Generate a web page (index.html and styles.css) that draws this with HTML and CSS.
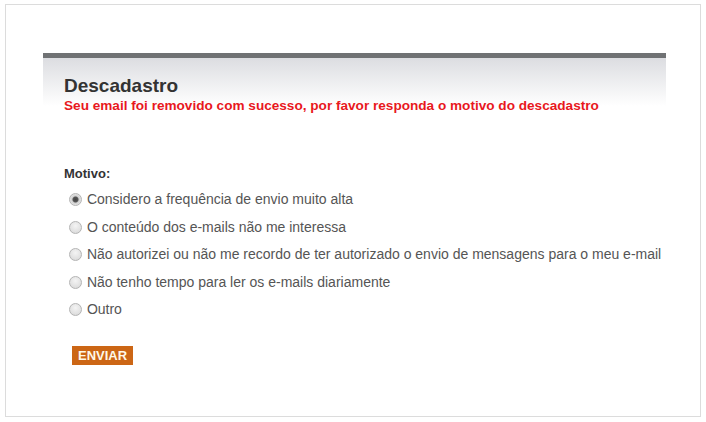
FILE: index.html
```html
<!DOCTYPE html>
<html>
  <head>
    <title>Descadastro</title>
    <link rel="stylesheet" href="styles.css">
  </head>
  <body>
    <div class="frame">
      <div class="panel">
        <div class="panel-header">
          <h1>Descadastro</h1>
          <p class="notice">Seu email foi removido com sucesso, por favor responda o motivo do descadastro</p>
        </div>

        <form class="reason-form">
          <label class="field-title">Motivo:</label>
          <ul class="options">
            <li><label><input type="radio" name="motivo" checked /> Considero a frequência de envio muito alta</label></li>
            <li><label><input type="radio" name="motivo" /> O conteúdo dos e-mails não me interessa</label></li>
            <li><label><input type="radio" name="motivo" /> Não autorizei ou não me recordo de ter autorizado o envio de mensagens para o meu e-mail</label></li>
            <li><label><input type="radio" name="motivo" /> Não tenho tempo para ler os e-mails diariamente</label></li>
            <li><label><input type="radio" name="motivo" /> Outro</label></li>
          </ul>
          <button type="submit" class="send-button">ENVIAR</button>
        </form>
      </div>
    </div>
  </body>
</html>
```

FILE: styles.css
```css
body {
  font-family: "Liberation Sans", Arial, sans-serif;
  margin: 0;
  padding: 4px 5px 0 5px;
  background: #fff;
}
.frame {
  width: 657px;
  height: 363px;
  border: 1px solid #dcdcdc;
  padding: 48px 0 0 37px;
}
.panel {
  width: 623px;
}
.panel-header {
  border-top: 5px solid #707274;
  background: linear-gradient(#dcdde1, #ffffff 48px);
  padding: 17px 0 0 21px;
  height: 39px;
}
.panel-header h1 {
  margin: 0;
  font-size: 19px;
  line-height: 22px;
  color: #333;
}
.notice {
  margin: 1px 0 0 0;
  font-size: 13.6px;
  font-weight: bold;
  line-height: 16px;
  color: #e8181d;
}
.reason-form {
  padding: 52px 0 0 21px;
}
.field-title {
  display: block;
  font-size: 13px;
  font-weight: bold;
  color: #333;
  margin-bottom: 10px;
}
.options {
  list-style: none;
  margin: 0;
  padding: 0;
}
.options li {
  height: 27.5px;
  font-size: 14px;
  color: #555;
}
.options input {
  appearance: none;
  -webkit-appearance: none;
  margin: 0 1px 0 5px;
  width: 13px;
  height: 13px;
  border: 1px solid #b4b4b4;
  border-radius: 50%;
  background: radial-gradient(circle at 50% 35%, #f4f4f4, #d6d6d6);
  vertical-align: -2px;
  box-sizing: border-box;
}
.options input:checked {
  background: radial-gradient(circle, #444 0, #555 2.5px, #cfcfcf 3.5px, #e9e9e9 6px);
}
.send-button {
  margin: 17px 0 0 8px;
  background: #cc6615;
  color: #fff8e8;
  border: none;
  font-family: "Liberation Sans", Arial, sans-serif;
  font-weight: bold;
  font-size: 13px;
  padding: 2px 6px;
  height: 19px;
  line-height: 15px;
  cursor: pointer;
}
```
